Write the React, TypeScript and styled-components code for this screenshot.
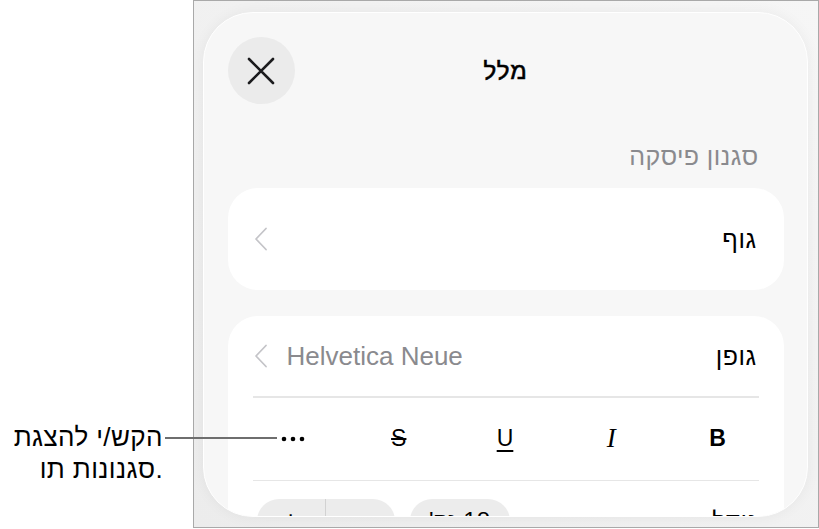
import styled, { createGlobalStyle } from "styled-components"

const GlobalStyle = createGlobalStyle`
    html, body {
        margin: 0;
        padding: 0;
        background: #ffffff;
        font-family: "Liberation Sans", "Noto Sans", "DejaVu Sans", sans-serif;
        color: #000000;
    }
`

const Page = styled.div`
    position: relative;
    display: flex;
    width: 819px;
    height: 529px;
    overflow: hidden;
`

const Callout = styled.div`
    width: 193px;
    flex-shrink: 0;
    box-sizing: border-box;
    padding: 421px 30px 0 0;
    text-align: right;
    font-size: 26px;
    letter-spacing: 0.4px;
    line-height: 32px;
`

const Leader = styled.div`
    position: absolute;
    left: 165px;
    top: 437px;
    width: 112px;
    height: 2px;
    background: #6e6e6e;
`

const Frame = styled.div`
    width: 626px;
    height: 528px;
    box-sizing: border-box;
    border: 1px solid #a9a9a9;
    background: linear-gradient(45deg, #ececec 0%, #f6f6f6 100%);
    padding: 11px 10px 0 9px;
`

const Sheet = styled.div`
    direction: rtl;
    height: 505px;
    box-sizing: border-box;
    border-radius: 50px;
    border: 1.5px solid #ffffff;
    background: #f7f7f7;
    box-shadow: 0 0 14px rgba(0, 0, 0, 0.05);
    overflow: hidden;
    padding: 24px 23.5px 0;
`

const Header = styled.div`
    display: grid;
    grid-template-columns: 1fr auto 1fr;
    align-items: center;
    height: 67px;
`

const Title = styled.div`
    font-size: 24px;
    font-weight: 400;
    -webkit-text-stroke: 0.6px #000000;
    letter-spacing: 0.8px;
    grid-column: 2;
`

const CloseButton = styled.button`
    grid-column: 3;
    justify-self: end;
    width: 67px;
    height: 67px;
    border-radius: 50%;
    border: none;
    background: #ebebeb;
    display: flex;
    align-items: center;
    justify-content: center;
    padding: 0;
`

const SectionLabel = styled.div`
    margin: 38px 25px 18px 0;
    font-size: 25px;
    letter-spacing: 0.4px;
    line-height: 28px;
    color: #8a8a8e;
`

const Card = styled.div<{ $height?: number; $gap?: number }>`
    background: #ffffff;
    border-radius: 30px;
    margin-top: ${({ $gap }) => $gap || 0}px;
    height: ${({ $height }) => ($height ? `${$height}px` : "auto")};
`

const Row = styled.div<{ $height: number }>`
    display: flex;
    align-items: center;
    justify-content: space-between;
    height: ${({ $height }) => $height}px;
    padding: 0 27px 0 25px;
`

const RowLabel = styled.span`
    font-size: 25px;
    letter-spacing: 0.5px;
`

const Value = styled.div`
    display: flex;
    align-items: center;
    gap: 18px;
    font-size: 26px;
    color: #8a8a8e;
`

const Divider = styled.div`
    height: 1.5px;
    background: #e6e6e6;
    margin: 0 25px;
`

const StyleRow = styled.div`
    display: flex;
    align-items: center;
    justify-content: space-between;
    height: 82px;
    padding: 0 46px 0 45px;
`

const StyleButton = styled.span<{ $kind: "b" | "i" | "u" | "s" | "more" }>`
    width: 40px;
    display: flex;
    justify-content: center;
    align-items: center;
    font-size: ${({ $kind }) => ($kind === "i" ? 27 : 23)}px;
    color: #000000;
    font-weight: ${({ $kind }) => ($kind === "b" ? 700 : 400)};
    font-style: ${({ $kind }) => ($kind === "i" ? "italic" : "normal")};
    font-family: ${({ $kind }) =>
        $kind === "i" ? '"Liberation Serif", serif' : '"Liberation Sans", sans-serif'};
    text-decoration: ${({ $kind }) =>
        $kind === "u" ? "underline" : $kind === "s" ? "line-through" : "none"};
    text-underline-offset: 4px;
    text-decoration-thickness: 1.5px;
`

const SizeRow = styled.div`
    display: flex;
    justify-content: space-between;
    padding: 18px 25px 0 29px;
`

const SizeLabel = styled.span`
    font-size: 25px;
    letter-spacing: 0.5px;
    line-height: 44px;
`

const Controls = styled.div`
    display: flex;
    gap: 15px;
`

const Pill = styled.div<{ $width: number }>`
    display: flex;
    align-items: center;
    justify-content: center;
    width: ${({ $width }) => $width}px;
    height: 44px;
    border-radius: 22px;
    background: #ececec;
    font-size: 24px;
`

const StepHalf = styled.div<{ $split?: boolean }>`
    flex: 1;
    height: 100%;
    display: flex;
    align-items: center;
    justify-content: center;
    border-left: ${({ $split }) => ($split ? "1px solid #d2d2d2" : "none")};
    font-size: 28px;
`

function Chevron() {
    return (
        <svg width="16" height="24" viewBox="0 0 16 24" fill="none">
            <polyline
                points="13,1.5 3,12 13,22.5"
                stroke="#c4c4c8"
                strokeWidth="1.8"
                strokeLinecap="round"
                strokeLinejoin="round"
            />
        </svg>
    )
}

function CloseIcon() {
    return (
        <svg width="28" height="28" viewBox="0 0 28 28" fill="none">
            <path
                d="M2 2 L26 26 M26 2 L2 26"
                stroke="#1c1c1e"
                strokeWidth="2.6"
                strokeLinecap="round"
            />
        </svg>
    )
}

function MoreIcon() {
    return (
        <svg width="24" height="6" viewBox="0 0 24 6">
            <circle cx="3" cy="3" r="2.3" fill="#000" />
            <circle cx="12" cy="3" r="2.3" fill="#000" />
            <circle cx="21" cy="3" r="2.3" fill="#000" />
        </svg>
    )
}

export default function App() {
    return (
        <Page>
            <GlobalStyle />
            <Callout>
                הקש/י להצגת
                <br />
                סגנונות תו.
            </Callout>
            <Leader />
            <Frame>
                <Sheet>
                    <Header>
                        <Title>מלל</Title>
                        <CloseButton aria-label="סגירה">
                            <CloseIcon />
                        </CloseButton>
                    </Header>
                    <SectionLabel>סגנון פיסקה</SectionLabel>
                    <Card $height={102}>
                        <Row $height={102}>
                            <RowLabel>גוף</RowLabel>
                            <Chevron />
                        </Row>
                    </Card>
                    <Card $gap={26}>
                        <Row $height={80}>
                            <RowLabel>גופן</RowLabel>
                            <Value>
                                <span>Helvetica Neue</span>
                                <Chevron />
                            </Value>
                        </Row>
                        <Divider />
                        <StyleRow>
                            <StyleButton $kind="b">B</StyleButton>
                            <StyleButton $kind="i">I</StyleButton>
                            <StyleButton $kind="u">U</StyleButton>
                            <StyleButton $kind="s">S</StyleButton>
                            <StyleButton $kind="more">
                                <MoreIcon />
                            </StyleButton>
                        </StyleRow>
                        <Divider />
                        <SizeRow>
                            <SizeLabel>גודל</SizeLabel>
                            <Controls>
                                <Pill $width={100}>18 נק'</Pill>
                                <Pill $width={138}>
                                    <StepHalf $split>−</StepHalf>
                                    <StepHalf>+</StepHalf>
                                </Pill>
                            </Controls>
                        </SizeRow>
                    </Card>
                </Sheet>
            </Frame>
        </Page>
    )
}
